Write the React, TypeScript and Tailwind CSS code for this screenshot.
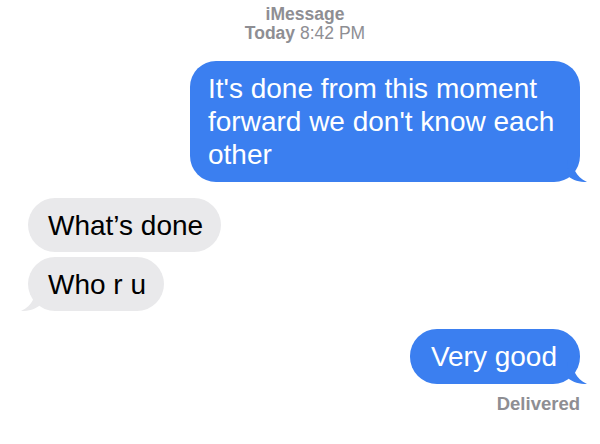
export default function App() {
  return (
    <div
      className="w-[600px] h-[444px] bg-white overflow-hidden flex flex-col"
      style={{ fontFamily: "'Liberation Sans', Arial, sans-serif" }}
    >
      {/* Header */}
      <div className="flex flex-col items-center pt-[5px] pl-[10px] text-[17.5px] leading-[19px] text-[#8e8e93]">
        <div className="font-semibold">iMessage</div>
        <div>
          <span className="font-semibold">Today</span> 8:42 PM
        </div>
      </div>

      {/* Messages */}
      <div className="flex flex-col pl-[28px] pr-[20px] pt-[18px] text-[28px] leading-[33px]">
        <div className="self-end relative">
          <div className="w-[390px] bg-[#3b7ff0] text-white rounded-[26px] pl-[18px] pr-[10px] py-[11px]">
            It's done from this moment forward we don't know each other
          </div>
          <Tail side="right" color="#3b7ff0" />
        </div>

        <div className="self-start mt-[16px]">
          <div className="bg-[#e9e9eb] text-black rounded-[27px] pl-[20px] pr-[18px] py-[10.5px]">
            What’s done
          </div>
        </div>
        <div className="self-start relative mt-[5px]">
          <div className="bg-[#e9e9eb] text-black rounded-[27px] pl-[20px] pr-[18px] py-[10.5px]">
            Who r u
          </div>
          <Tail side="left" color="#e9e9eb" />
        </div>

        <div className="self-end relative mt-[18px]">
          <div className="bg-[#3b7ff0] text-white rounded-[27px] pl-[21px] pr-[23px] py-[11px]">
            Very good
          </div>
          <Tail side="right" color="#3b7ff0" />
        </div>

        <div className="self-end mt-[10px] text-[18.5px] leading-[19px] font-semibold text-[#8e8e93]">
          Delivered
        </div>
      </div>
    </div>
  );
}

function Tail({ side, color }: { side: "left" | "right"; color: string }) {
  if (side === "right") {
    return (
      <svg
        className="absolute right-[-7px] bottom-0"
        width="20"
        height="22"
        viewBox="0 0 20 22"
      >
        <path
          d="M0 0 L6 0 C6 8 8 16 20 22 C12 22 6 20 2 17 Z"
          fill={color}
        />
      </svg>
    );
  }
  return (
    <svg
      className="absolute left-[-7px] bottom-0"
      width="20"
      height="22"
      viewBox="0 0 20 22"
    >
      <path d="M20 0 L14 0 C14 8 12 16 0 22 C8 22 14 20 18 17 Z" fill={color} />
    </svg>
  );
}
